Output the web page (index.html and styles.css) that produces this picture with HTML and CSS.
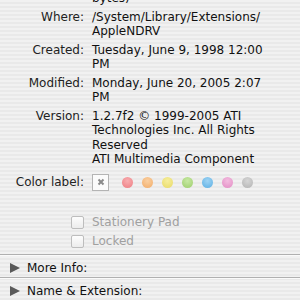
FILE: index.html
```html
<!DOCTYPE html>
<html lang="en">
<head>
  <meta charset="UTF-8" />
  <title>AppleNDRV Info</title>
  <link rel="stylesheet" href="styles.css">
</head>
<body>

  <div class="info-panel">
    <!-- General section -->
    <div class="info-grid">
      <div class="label">Size:</div>
      <div class="value">16 KB on disk (13,480<br>bytes)</div>

      <div class="label">Where:</div>
      <div class="value">/System/Library/Extensions/<br>AppleNDRV</div>

      <div class="label">Created:</div>
      <div class="value">Tuesday, June 9, 1998 12:00 PM</div>

      <div class="label">Modified:</div>
      <div class="value">Monday, June 20, 2005 2:07 PM</div>

      <div class="label">Version:</div>
      <div class="value">1.2.7f2 © 1999-2005 ATI Technologies Inc. All Rights Reserved<br>ATI Multimedia Component</div>

      <div class="label color-row">Color label:</div>
      <div class="value color-row">
        <div class="labels">
          <span class="no-label">
            <svg viewBox="0 0 10 10"><path d="M2.5 2.5l5 5M7.5 2.5l-5 5"/></svg>
          </span>
          <span class="dot red"></span>
          <span class="dot orange"></span>
          <span class="dot yellow"></span>
          <span class="dot green"></span>
          <span class="dot blue"></span>
          <span class="dot purple"></span>
          <span class="dot gray"></span>
        </div>
      </div>

      <div class="label check-row first"><span class="checkbox"></span></div>
      <div class="value check-row first disabled">Stationery Pad</div>

      <div class="label check-row"><span class="checkbox"></span></div>
      <div class="value check-row disabled">Locked</div>
    </div>

    <!-- Collapsed sections -->
    <div class="section">
      <span class="triangle"></span>
      <span>More Info:</span>
    </div>
    <div class="section">
      <span class="triangle"></span>
      <span>Name &amp; Extension:</span>
    </div>
  </div>

</body>
</html>
```

FILE: styles.css
```css
body {
  margin: 0;
  font-family: "DejaVu Sans", "Lucida Grande", sans-serif;
  font-size: 12px;
  color: #111;
  background: repeating-linear-gradient(to bottom, #f1f1f1 0, #f1f1f1 2px, #e9e9e9 2px, #e9e9e9 4px);
  height: 300px;
  overflow: hidden;
}

.info-panel {
  margin-top: -23.5px;
}

.info-grid {
  display: grid;
  grid-template-columns: 84px 186px;
  column-gap: 8px;
  row-gap: 4px;
  line-height: 14.5px;
}

.label {
  text-align: right;
  color: #222;
}

.color-row {
  margin-top: 2.5px;
  display: flex;
  align-items: center;
  justify-content: flex-end;
  height: 18px;
}

.value.color-row {
  justify-content: flex-start;
}

.labels {
  display: flex;
  align-items: center;
  gap: 9px;
}

.no-label {
  width: 15px;
  height: 15px;
  border: 1px solid #b4b4b4;
  background: #fbfbfb;
  display: flex;
  align-items: center;
  justify-content: center;
  margin-right: 4px;
}

.no-label svg {
  width: 10px;
  height: 10px;
  stroke: #8a8a8a;
  stroke-width: 2;
}

.dot {
  width: 11px;
  height: 11px;
  border-radius: 50%;
}

.dot.red { background: radial-gradient(circle at 50% 35%, #f8aeb1, #ee7b80); }
.dot.orange { background: radial-gradient(circle at 50% 35%, #fad0a2, #f2ab66); }
.dot.yellow { background: radial-gradient(circle at 50% 35%, #f6ee9e, #e8da64); }
.dot.green { background: radial-gradient(circle at 50% 35%, #c8e9a4, #9ccd6a); }
.dot.blue { background: radial-gradient(circle at 50% 35%, #9fd4f4, #5aaee3); }
.dot.purple { background: radial-gradient(circle at 50% 35%, #f3bde0, #e28ac3); }
.dot.gray { background: radial-gradient(circle at 50% 35%, #d6d6d6, #b2b2b2); }

.check-row {
  display: flex;
  align-items: center;
  justify-content: flex-end;
  height: 15px;
}

.check-row.first {
  margin-top: 19.5px;
}

.value.check-row {
  justify-content: flex-start;
}

.disabled {
  color: #a0a0a0;
}

.checkbox {
  width: 11px;
  height: 11px;
  border: 1px solid #bdbdbd;
  border-radius: 2px;
  background: linear-gradient(#fdfdfd, #ececec);
}

.section {
  display: flex;
  align-items: center;
  gap: 7px;
  height: 18px;
  padding-top: 4px;
  padding-left: 10px;
  border-top: 1px solid #b0b0b0;
  box-shadow: inset 0 1px 0 #fafafa;
  color: #111;
}

.info-grid + .section {
  margin-top: 5.5px;
}

.triangle {
  width: 0;
  height: 0;
  border-top: 5px solid transparent;
  border-bottom: 5px solid transparent;
  border-left: 10px solid #5a5a5a;
}
```
